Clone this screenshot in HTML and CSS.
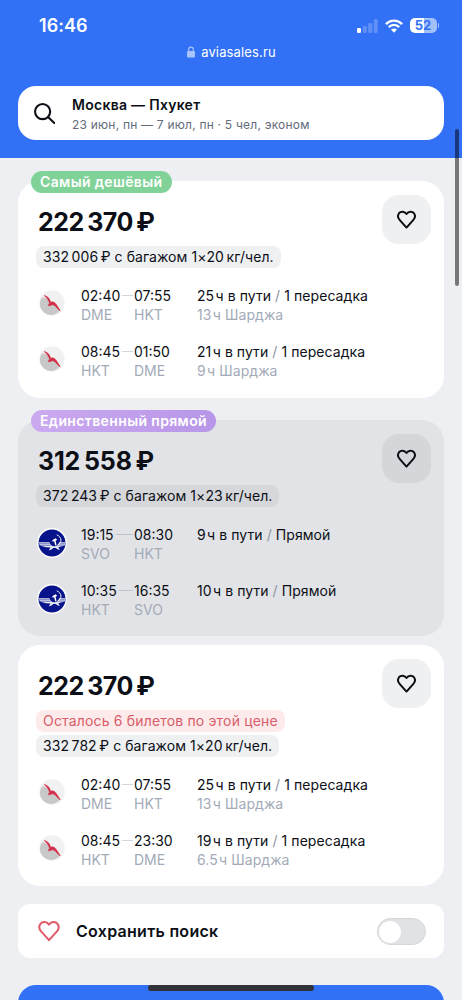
FILE: index.html
```
<!DOCTYPE html>
<html lang="ru">
<head>
<meta charset="utf-8">
<title>Москва — Пхукет</title>
<link rel="stylesheet" href="styles.css">
</head>
<body>
<svg class="defs" width="0" height="0" aria-hidden="true">
  <symbol id="heart" viewBox="0 0 24 24"><path d="M12 21.2 4.1 12.4C2.2 10.2 1.8 7.300 3.300 5.100 5.400 2.200 9.600 2.300 12 5.700c2.400-3.400 6.600-3.500 8.700-.6 1.500 2.200 1.100 5.100-.8 7.300z" fill="none" stroke="currentColor" stroke-linejoin="round"/></symbol>
  <symbol id="arabia" viewBox="0 0 26 26">
    <circle cx="13" cy="13" r="12.700" fill="#f1f1f2"/>
    <path d="M2.800 7.500c4 0 6 2 9 5s6.500 6 9.500 7.500A11 11 0 0 1 2.800 7.500z" fill="#c8c8c9"/>
    <path d="M5.300 5.600c3.500.8 5.500 3.200 6.300 6.800 1.500-.8 3.300-.6 4.700 1 1.800 2 2.600 3.800 4.800 7.300-2.600-1.400-3.600-4.300-6-5.500-1.700-.9-2.600-.5-3.800.2-.8.500-1.800.2-2.200-.4l1.700-1C10 10.500 8 8 5.300 5.600z" fill="#d32d47" stroke="#d32d47" stroke-width=".8"/>
  </symbol>
  <symbol id="aeroflot" viewBox="0 0 30 30">
    <circle cx="15" cy="15" r="15" fill="#fff"/>
    <circle cx="15" cy="15" r="13.500" fill="#07138a"/>
    <path d="M1.700 14.200h10.800c.7 2.600 2.400 4 5 4s4-1.400 4.500-4h6.300l-.5 3.300-5 1.200-1.500.6 1.800 3-3.100-1.200-1.200-1h-2.600l-1.200 1.200-3.200 1.200 1.600-3-4.400-.3-6.200-1.600z" fill="#e4e6f3"/>
    <path d="M2 15.700h10.800M2.600 17.300h11.200M27.800 15.700h-6M27.400 17.100h-7" stroke="#07138a" stroke-width=".5"/>
    <path d="M19.800 6.800c5.200 2.200 5.600 8.200.8 10.200" fill="none" stroke="#fff" stroke-width="1"/>
    <path d="m15.200 12.200 3.400-2 1.600 1.500-1.600 1 1 4.500-1.300.2-1.200-4.200-1.200.5z" fill="#fff"/>
  </symbol>
</svg>

<header class="header">
  <div class="status">
    <span class="clock">16:46</span>
    <div class="indicators">
      <svg class="signal" viewBox="0 0 21 14"><rect y="9" width="4" height="5" rx="1.200" fill="#fff"/><g fill="#fff" opacity=".22"><rect x="5.800" y="7" width="4" height="7" rx="1.200"/><rect x="11.200" y="4" width="4" height="10" rx="1.200"/><rect x="16.700" y="0" width="4" height="14" rx="1.200"/></g></svg>
      <svg class="wifi" viewBox="0 0 18 14"><g fill="none" stroke="#fff" stroke-width="2.400"><path d="M.9 5.100c4.600-4.600 11.600-4.600 16.200 0"/><path d="M3.800 8.100c3-3 7.400-3 10.400 0"/></g><path d="M9 13.700 6 10.600c1.700-1.600 4.300-1.600 6 0z" fill="#fff"/></svg>
      <div class="battery"><span class="battery-text">52</span></div>
      <i class="battery-tip"></i>
    </div>
  </div>
  <div class="address">
    <svg class="lock" viewBox="0 0 8 12"><rect y="5" width="8" height="6.500" rx="1.200" fill="#a9c4ff"/><path d="M1.700 5.500V3.400a2.300 2.300 0 0 1 4.600 0v2.100" fill="none" stroke="#a9c4ff" stroke-width="1.100"/></svg>
    <span>aviasales.ru</span>
  </div>
  <div class="search">
    <svg class="glass" viewBox="0 0 20 20"><circle cx="8.200" cy="8.200" r="7.200"/><path d="m13.600 13.600 5.700 5.500"/></svg>
    <div class="query">
      <div class="route">Москва — Пхукет</div>
      <div class="details">23 июн, пн — 7 июл, пн · 5 чел, эконом</div>
    </div>
  </div>
</header>
<div class="scrollbar"></div>

<main class="results">
  <article class="card first">
    <span class="badge green">Самый дешёвый</span>
    <div class="top"><div class="price">222&thinsp;370&thinsp;₽</div><button class="like"><svg><use href="#heart"/></svg></button></div>
    <div class="chips"><span class="chip">332&thinsp;006&thinsp;₽ с багажом 1×20&thinsp;кг/чел.</span></div>
    <div class="legs">
      <div class="leg"><svg class="logo small"><use href="#arabia"/></svg><div class="point from"><div class="time">02:40<i></i></div><div class="sub">DME</div></div><div class="point to"><div class="time">07:55</div><div class="sub">HKT</div></div><div class="trip"><div>25&#8202;ч в пути <s>/</s> 1 пересадка</div><div class="sub">13&#8202;ч Шарджа</div></div></div>
      <div class="leg"><svg class="logo small"><use href="#arabia"/></svg><div class="point from"><div class="time">08:45<i></i></div><div class="sub">HKT</div></div><div class="point to"><div class="time">01:50</div><div class="sub">DME</div></div><div class="trip"><div>21&#8202;ч в пути <s>/</s> 1 пересадка</div><div class="sub">9&#8202;ч Шарджа</div></div></div>
    </div>
  </article>

  <article class="card grey">
    <span class="badge purple">Единственный прямой</span>
    <div class="top"><div class="price">312&thinsp;558&thinsp;₽</div><button class="like"><svg><use href="#heart"/></svg></button></div>
    <div class="chips"><span class="chip">372&thinsp;243&thinsp;₽ с багажом 1×23&thinsp;кг/чел.</span></div>
    <div class="legs">
      <div class="leg"><svg class="logo"><use href="#aeroflot"/></svg><div class="point from"><div class="time">19:15<i></i></div><div class="sub">SVO</div></div><div class="point to"><div class="time">08:30</div><div class="sub">HKT</div></div><div class="trip"><div>9&#8202;ч в пути <s>/</s> Прямой</div></div></div>
      <div class="leg"><svg class="logo"><use href="#aeroflot"/></svg><div class="point from"><div class="time">10:35<i></i></div><div class="sub">HKT</div></div><div class="point to"><div class="time">16:35</div><div class="sub">SVO</div></div><div class="trip"><div>10&#8202;ч в пути <s>/</s> Прямой</div></div></div>
    </div>
  </article>

  <article class="card last">
    <div class="top"><div class="price">222&thinsp;370&thinsp;₽</div><button class="like"><svg><use href="#heart"/></svg></button></div>
    <div class="chips"><span class="chip red">Осталось 6 билетов по этой цене</span><span class="chip">332&thinsp;782&thinsp;₽ с багажом 1×20&thinsp;кг/чел.</span></div>
    <div class="legs">
      <div class="leg"><svg class="logo small"><use href="#arabia"/></svg><div class="point from"><div class="time">02:40<i></i></div><div class="sub">DME</div></div><div class="point to"><div class="time">07:55</div><div class="sub">HKT</div></div><div class="trip"><div>25&#8202;ч в пути <s>/</s> 1 пересадка</div><div class="sub">13&#8202;ч Шарджа</div></div></div>
      <div class="leg"><svg class="logo small"><use href="#arabia"/></svg><div class="point from"><div class="time">08:45<i></i></div><div class="sub">HKT</div></div><div class="point to"><div class="time">23:30</div><div class="sub">DME</div></div><div class="trip"><div>19&#8202;ч в пути <s>/</s> 1 пересадка</div><div class="sub">6.5&#8202;ч Шарджа</div></div></div>
    </div>
  </article>

  <section class="save"><svg class="save-heart"><use href="#heart"/></svg><span>Сохранить поиск</span><div class="toggle"><i></i></div></section>
  <div class="promo"></div>
</main>
<div class="home-bar"></div>
</body>
</html>
```
FILE: styles.css
```
* { box-sizing: border-box; }
body {
  position: relative;
  width: 462px;
  height: 1000px;
  margin: 0;
  overflow: hidden;
  background: #eeeff3;
  color: #0c0f16;
  font-family: Inter, "Liberation Sans", sans-serif;
}
.defs { position: absolute; }
.header {
  height: 158px;
  padding: 14px 18px 0;
  background: #3271f6;
  color: #fff;
}
.status {
  display: flex;
  align-items: center;
  justify-content: space-between;
  height: 23px;
  padding: 0 5px 0 21px;
}
.clock { font-size: 18px; font-weight: 600; letter-spacing: .05px; }
.indicators { display: flex; align-items: center; }
.signal { width: 21px; height: 14px; margin-right: 7px; }
.wifi { width: 18px; height: 14px; margin-right: 7px; }
.battery {
  display: flex;
  justify-content: center;
  width: 27px;
  height: 15px;
  border-radius: 5px;
  background: linear-gradient(90deg, #fff 52%, #a3c0fb 52%);
  color: #3271f6;
}
.battery-text { font-size: 13px; font-weight: 700; line-height: 15px; }
.battery-tip { width: 1.500px; height: 5px; margin-left: 1px; border-radius: 0 2px 2px 0; background: #a3c0fb; }
.address {
  display: flex;
  align-items: center;
  justify-content: center;
  gap: 6px;
  height: 19px;
  margin-top: 5px;
  padding-left: 1px;
  font-size: 13px;
  letter-spacing: .15px;
}
.lock { width: 8px; height: 12px; }
.search {
  display: flex;
  align-items: center;
  height: 54px;
  margin-top: 25px;
  padding-left: 16px;
  border-radius: 18px;
  background: #fff;
}
.glass { width: 21px; height: 21px; margin-right: 17px; fill: none; stroke: #0c0f16; stroke-width: 2; stroke-linecap: round; }
.query { padding-top: 3px; }
.route { color: #0c0f16; font-size: 14px; font-weight: 600; line-height: 20px; letter-spacing: .28px; }
.details { color: #626b7a; font-size: 12px; line-height: 20px; letter-spacing: .21px; }
.scrollbar {
  position: absolute;
  top: 129px;
  left: 455px;
  width: 4px;
  height: 157px;
  border-radius: 2px;
  background: rgba(0, 0, 0, .5);
}
.results { padding: 0 18px; }
.card {
  position: relative;
  margin-bottom: 9px;
  padding: 13.500px 13px 17px 18px;
  border-radius: 22px;
  background: #fff;
}
.card.first { height: 217px; margin-top: 23px; margin-bottom: 22px; }
.card.grey { height: 216px; background: #e2e3e6; }
.card.last { height: 241px; margin-bottom: 18px; }
.badge {
  position: absolute;
  top: -10px;
  left: 13px;
  height: 22px;
  padding: 0 9px;
  border-radius: 11px;
  color: #fff;
  font-size: 14px;
  font-weight: 600;
  line-height: 22px;
  letter-spacing: .37px;
  white-space: nowrap;
}
.green { background: #80d298; }
.purple { background: linear-gradient(90deg, #cbaaf0, #b896e8); }
.top { display: flex; justify-content: space-between; height: 49px; padding-left: 2px; }
.price { font-size: 25px; font-weight: 700; line-height: 54px; letter-spacing: -.5px; white-space: nowrap; }
.grey .price { letter-spacing: -.15px; }
.like {
  display: grid;
  place-items: center;
  width: 49px;
  height: 49px;
  padding: 0;
  border: 0;
  border-radius: 17px;
  background: #eff0f2;
  color: #0c0f16;
}
.grey .like { background: #d5d6d9; }
.like svg { width: 21px; height: 21px; stroke-width: 2.300; }
.chips { display: flex; flex-direction: column; align-items: flex-start; gap: 3px; margin-top: 2px; }
.chip {
  height: 22px;
  padding: 0 7px;
  border-radius: 8px;
  background: #eff0f2;
  font-size: 14px;
  line-height: 22px;
  letter-spacing: .06px;
  white-space: nowrap;
}
.grey .chip { background: #d6d7da; }
.chip.red { background: #fdebec; color: #d85d69; letter-spacing: .17px; }
.legs { display: flex; flex-direction: column; gap: 18px; margin-top: 18px; }
.leg { display: flex; align-items: flex-start; height: 38px; font-size: 14px; line-height: 19px; white-space: nowrap; }
.logo { width: 30px; height: 30px; margin: 3px 14.500px 0 .5px; }
.logo.small { width: 26px; height: 26px; margin: 4px 16.500px 0 2.500px; }
.from { width: 53px; }
.to { width: 63px; }
.trip { letter-spacing: .07px; }
.time { display: flex; align-items: center; }
.time i { flex: 1; height: 1px; margin: 0 1px 0 2px; background: #d3d6dc; }
.grey .time i { background: #c0c3c9; }
.sub { color: #a3abb8; }
.leg s { color: #8d95a2; text-decoration: none; }
.save {
  display: flex;
  align-items: center;
  height: 54px;
  padding: 0 18px 0 19px;
  border-radius: 12px;
  background: #fff;
  font-size: 16px;
  font-weight: 600;
  letter-spacing: .28px;
}
.save-heart { width: 24px; height: 24px; margin-right: 15px; color: #df5b68; stroke-width: 2; }
.toggle { width: 49px; height: 27px; margin-left: auto; padding: 2px; border-radius: 14px; background: #e1e2e5; border: 1px solid #d5d6d9; }
.toggle i { display: block; width: 22px; height: 22px; margin-left: -1px; border-radius: 50%; background: #fff; }
.promo { height: 40px; margin-top: 27px; border-radius: 18px 18px 0 0; background: #3271f6; }
.home-bar { position: absolute; top: 985px; left: 148px; width: 166px; height: 6px; border-radius: 3px; background: #303237; }
```
